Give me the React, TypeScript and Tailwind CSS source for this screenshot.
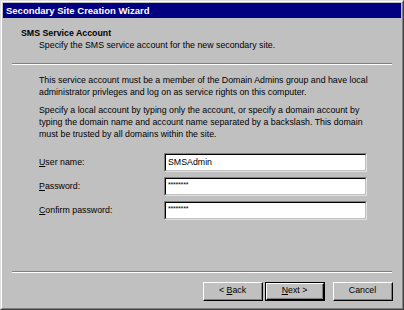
import React from "react";

const font = { fontFamily: '"Liberation Sans", Arial, sans-serif' };

function Field({ value, small }: { value: string; small?: boolean }) {
  return (
    <div className="w-[203px] h-[19px] bg-white border-t border-l border-t-[#808080] border-l-[#808080] border-b border-r border-b-[#dfdfdf] border-r-[#dfdfdf]">
      <div className="w-full h-full border-t border-l border-t-[#000000] border-l-[#000000] border-b border-r border-b-[#c0c0c0] border-r-[#c0c0c0] flex items-start pl-[2px] pt-[1px]">
        {small ? (
          <span className="text-[7px] leading-[9px] text-black tracking-[-0.2px]">********</span>
        ) : (
          <span className="text-[8.8px] leading-[13px] text-black">{value}</span>
        )}
      </div>
    </div>
  );
}

function Btn({ children, def }: { children: React.ReactNode; def?: boolean }) {
  const inner = (
    <div className="w-full h-full bg-[#c0c0c0] border-t border-l border-t-white border-l-white border-b border-r border-b-black border-r-black">
      <div className="w-full h-full border-b border-r border-b-[#808080] border-r-[#808080] flex items-center justify-center text-[8.8px] text-black whitespace-pre">
        {children}
      </div>
    </div>
  );
  return def ? (
    <div className="w-[60px] h-[19px] border border-black">{inner}</div>
  ) : (
    <div className="w-[60px] h-[19px]">{inner}</div>
  );
}

export default function App() {
  return (
    <div
      style={font}
      className="w-[404px] h-[310px] bg-[#c0c0c0] border-t border-l border-t-[#dfdfdf] border-l-[#dfdfdf] border-b border-r border-b-[#404040] border-r-[#404040] flex flex-col"
    >
      <div className="flex-1 flex flex-col border-t border-l border-t-white border-l-white border-b border-r border-b-[#808080] border-r-[#808080] p-[1px]">
        <div className="h-[15px] bg-[#000080] flex items-center pl-[3px]">
          <span className="text-white font-bold text-[9.5px] leading-[15px]">Secondary Site Creation Wizard</span>
        </div>
        <div className="pl-[18px] pt-[9px] text-black">
          <div className="font-bold text-[8.8px] leading-[12px]">SMS Service Account</div>
          <div className="pl-[18px] text-[8.8px] leading-[12px]">Specify the SMS service account for the new secondary site.</div>
        </div>
        <div className="mx-[9px] mt-[12px] border-t border-t-[#808080] border-b border-b-white" />
        <div className="pl-[36px] pt-[9px] pr-[16px] text-[8.8px] leading-[12px] text-black">
          <p>This service account must be a member of the Domain Admins group and have local<br />administrator privleges and log on as service rights on this computer.</p>
          <p className="mt-[6px]">Specify a local account by typing only the account, or specify a domain account by<br />typing the domain name and account name separated by a backslash. This domain<br />must be trusted by all domains within the site.</p>
        </div>
        <div className="pl-[36px] pt-[13px] flex flex-col gap-[5px] text-[8.8px] text-black">
          <div className="flex items-center">
            <span className="w-[125px]"><u>U</u>ser name:</span>
            <Field value="SMSAdmin" />
          </div>
          <div className="flex items-center">
            <span className="w-[125px]"><u>P</u>assword:</span>
            <Field value="" small />
          </div>
          <div className="flex items-center">
            <span className="w-[125px]"><u>C</u>onfirm password:</span>
            <Field value="" small />
          </div>
        </div>
        <div className="flex-1" />
        <div className="mx-[9px] border-t border-t-[#808080] border-b border-b-white" />
        <div className="flex justify-end pr-[8px] pt-[9px] pb-[6px]">
          <Btn>{"< "}<u>B</u>ack</Btn>
          <div className="w-[2px]" />
          <Btn def><u>N</u>ext{" >"}</Btn>
          <div className="w-[8px]" />
          <Btn>Cancel</Btn>
        </div>
      </div>
    </div>
  );
}
